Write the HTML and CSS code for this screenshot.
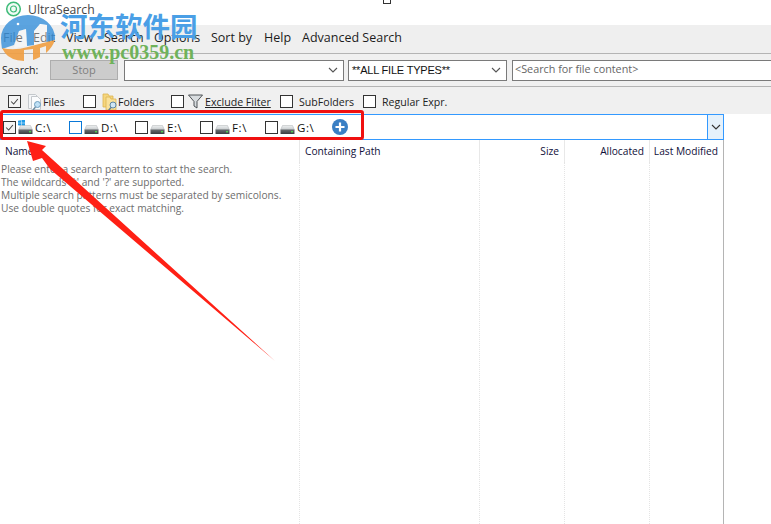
FILE: index.html
```html
<!DOCTYPE html>
<html lang="en">
<head>
<meta charset="utf-8">
<title>UltraSearch</title>
<link rel="stylesheet" href="styles.css">
</head>
<body>
<svg class="defs" width="0" height="0" aria-hidden="true">
  <defs>
    <linearGradient id="hddtop" x1="0" y1="0" x2="0" y2="1"><stop offset="0" stop-color="#eef0f1"/><stop offset="1" stop-color="#c4c8ca"/></linearGradient>
    <linearGradient id="hddbody" x1="0" y1="0" x2="0" y2="1"><stop offset="0" stop-color="#6b7073"/><stop offset="1" stop-color="#3a3e41"/></linearGradient>
  </defs>
  <symbol id="drive" viewBox="0 0 15 9">
    <path d="M2.500 .5h10l2 4.500H.5z" fill="url(#hddtop)" stroke="#aeb2b4" stroke-width=".5"/>
    <rect x=".5" y="4.500" width="14" height="4.500" rx=".6" fill="url(#hddbody)"/>
    <rect x="11" y="6" width="2" height="1.400" fill="#4fd04f"/>
  </symbol>
</svg>
<div class="app">
  <header class="titlebar">
    <div class="title-group">
      <svg class="app-icon" viewBox="0 0 18 18"><circle cx="8.500" cy="8" r="6.800" fill="#f0fbf5" stroke="#3dbb78" stroke-width="1.500"/><circle cx="8.500" cy="8" r="3" fill="none" stroke="#3dbb78" stroke-width="1.200"/></svg>
      <span class="app-name">UltraSearch</span>
    </div>
    <span class="title-mark"></span>
  </header>

  <nav class="menubar">
    <span class="menu m1">File</span>
    <span class="menu m2">Edit</span>
    <span class="menu m3">View</span>
    <span class="menu m4">Search</span>
    <span class="menu m5">Options</span>
    <span class="menu m6">Sort by</span>
    <span class="menu m7">Help</span>
    <span class="menu">Advanced Search</span>
  </nav>

  <section class="toolbar">
    <label class="search-label">Search:</label>
    <button class="stop">Stop</button>
    <div class="combo combo-pattern"><span class="combo-text"></span><svg class="chev" viewBox="0 0 10 6"><path d="M1 1l4 4 4-4" fill="none" stroke="#555" stroke-width="1.100"/></svg></div>
    <div class="combo combo-types"><span class="combo-text">**ALL FILE TYPES**</span><svg class="chev" viewBox="0 0 10 6"><path d="M1 1l4 4 4-4" fill="none" stroke="#555" stroke-width="1.100"/></svg></div>
    <div class="content-box">&lt;Search for file content&gt;</div>
  </section>

  <section class="options">
    <span class="opt opt-files"><i class="box on"><svg viewBox="0 0 13 13"><path d="M2.500 6.500l3 3 5-6" fill="none" stroke="#444" stroke-width="1.200"/></svg></i>
      <svg class="opt-icon" viewBox="0 0 16 18"><path d="M1.500 1.500h7l3 3v11h-10z" fill="#f4f6f8" stroke="#c4c8cc"/><path d="M4.500 3.500h6l3 3v10h-9z" fill="#fbfcfd" stroke="#c4c8cc"/><circle cx="10.500" cy="11.500" r="3" fill="#bfe0f5" stroke="#6d9dbd"/><path d="M8.500 14l-2.500 3" stroke="#6d8aa0" stroke-width="1.400"/></svg>
      Files</span>
    <span class="opt opt-folders"><i class="box"></i>
      <svg class="opt-icon" viewBox="0 0 16 18"><path d="M1 1h5l1 2h4v11H1z" fill="#f5d67e" stroke="#dcb450" stroke-width=".8"/><path d="M4 4h4l1 2h5v11H4z" fill="#f9e19a" stroke="#dcb450" stroke-width=".8"/><circle cx="11" cy="12" r="3" fill="#cfe6f5" stroke="#5d87a5"/><path d="M9 14.500l-2.500 3" stroke="#5d7d95" stroke-width="1.400"/></svg>
      Folders</span>
    <span class="opt opt-filter"><i class="box"></i>
      <svg class="opt-funnel" viewBox="0 0 15 15"><path d="M.5 1h14L9 7.500V14l-3-2V7.500z" fill="#d8dcdf" stroke="#3d4245" stroke-width=".9"/></svg>
      <u>Exclude Filter</u></span>
    <span class="opt opt-sub"><i class="box"></i><span class="opt-text">SubFolders</span></span>
    <span class="opt"><i class="box"></i><span class="opt-text">Regular Expr.</span></span>
  </section>

  <section class="drives">
    <div class="drive-list">
      <span class="drive d-c"><i class="box on"><svg viewBox="0 0 13 13"><path d="M2.500 6.500l3 3 5-6" fill="none" stroke="#444" stroke-width="1.200"/></svg></i>
        <span class="drive-icon"><svg class="win" viewBox="0 0 7 6"><path d="M0 .7l3-.5v2.500H0zM3.500.1L7 -.3v3H3.500zM0 3.200h3v2.500L0 5.300zM3.500 3.200H7v3l-3.500-.5z" fill="#1f9be8"/></svg><svg class="hdd"><use href="#drive"/></svg></span>
        <span class="drive-label">C:\</span></span>
      <span class="drive"><i class="box focus"></i><span class="drive-icon"><svg class="hdd"><use href="#drive"/></svg></span><span class="drive-label">D:\</span></span>
      <span class="drive d-e"><i class="box"></i><span class="drive-icon"><svg class="hdd"><use href="#drive"/></svg></span><span class="drive-label">E:\</span></span>
      <span class="drive d-e"><i class="box"></i><span class="drive-icon"><svg class="hdd"><use href="#drive"/></svg></span><span class="drive-label">F:\</span></span>
      <span class="drive d-g"><i class="box"></i><span class="drive-icon"><svg class="hdd"><use href="#drive"/></svg></span><span class="drive-label">G:\</span></span>
      <svg class="add" viewBox="0 0 16 16"><circle cx="8" cy="8" r="8" fill="#3a7fc4"/><path d="M8 3.500v9M3.500 8h9" stroke="#fff" stroke-width="2.200"/></svg>
    </div>
    <div class="drop"><svg class="chev" viewBox="0 0 10 6"><path d="M1 1l4 4 4-4" fill="none" stroke="#333" stroke-width="1.100"/></svg></div>
  </section>

  <section class="results">
    <div class="cols head">
      <div class="col">Name</div>
      <div class="col">Containing Path</div>
      <div class="col right">Size</div>
      <div class="col right">Allocated</div>
      <div class="col right last">Last Modified</div>
    </div>
    <div class="cols body">
      <div class="col msg">
        <p>Please enter a search pattern to start the search.</p>
        <p>The wildcards '*' and '?' are supported.</p>
        <p>Multiple search patterns must be separated by semicolons.</p>
        <p>Use double quotes for exact matching.</p>
      </div>
      <div class="col"></div>
      <div class="col"></div>
      <div class="col"></div>
      <div class="col last"></div>
    </div>
  </section>
</div>

<!-- overlays that sit on top of the screenshot -->
<div class="redbox"></div>
<svg class="arrow" viewBox="0 0 771 524"><path d="M27 141L46 146L42 150L275 361L50 169L42 158L33 161z" fill="#ff2015"/></svg>
<div class="watermark">
  <svg class="wm-logo" viewBox="0 0 56 46">
    <path d="M1 23A27 23 0 0 1 55 23L55 25L47 27V10L40 9L34 16V30L27 31L26 14L19 16L14 30L2 34Q1 28 1 23z" fill="#3f94da" fill-opacity=".85"/>
    <path d="M2 33Q14 36 28 32Q42 28 55 25Q52 33 46 38V31L40 33V42Q36 44 33 45V34L24 35V46Q10 45 5 38z" fill="#f0a044" fill-opacity=".92"/>
    <path d="M19 16L26 14L27 31L14 33zM34 16L40 9L47 10V27L34 30z" fill="#fff" fill-opacity=".4"/>
    <circle cx="18" cy="9" r="1.300" fill="#fff"/>
  </svg>
  <div class="wm-cn">河东软件园</div>
  <div class="wm-url">www.pc0359.cn</div>
</div>
</body>
</html>
```
FILE: styles.css
```css
* { box-sizing: border-box; }
html, body { margin: 0; padding: 0; }
body {
  width: 771px;
  height: 524px;
  overflow: hidden;
  background: #fff;
  font-family: "Open Sans", "Noto Sans", sans-serif;
  font-size: 11px;
  color: #222;
  position: relative;
}
.defs { position: absolute; }
.app { display: flex; flex-direction: column; height: 524px; }

.titlebar { height: 25px; display: flex; background: #fff; }
.title-group { width: 383px; display: flex; align-items: center; padding: 0 0 6px 5px; }
.app-icon { width: 18px; height: 18px; margin-top: 1px; }
.app-name { margin-left: 5px; font-size: 12.2px; color: #444; }
.title-mark { width: 8px; height: 4px; border: 1px solid #333; border-top: 0; }

.menubar {
  height: 29px;
  background: #efefef;
  border-bottom: 1px solid #b4b4b4;
  display: flex;
  align-items: center;
  padding: 0 0 4px 3px;
  font-size: 12.5px;
  color: #1c1c1c;
}
.menu { flex: none; }
.m1 { width: 30px; } .m2 { width: 33px; } .m3 { width: 38px; } .m4 { width: 50px; }
.m5 { width: 57px; } .m6 { width: 53px; } .m7 { width: 38px; }

.toolbar {
  height: 33px;
  background: #f0f0f0;
  border-bottom: 1px solid #b4b4b4;
  display: flex;
  align-items: center;
  padding: 0 0 0 2px;
  overflow: hidden;
}
.toolbar > * { flex: none; }
.search-label { width: 48px; font-size: 10.6px; }
.stop {
  width: 68px; height: 20px; padding: 0 0 2px;
  background: #ccc; border: 1px solid #adadad; color: #7f7f7f;
  font: 11px "Open Sans", sans-serif;
}
.combo, .content-box {
  height: 21px; background: #fff; border: 1px solid #7a7a7a;
  display: flex; align-items: center;
}
.combo { justify-content: space-between; padding: 0 5px 0 3px; }
.combo-pattern { width: 220px; margin-left: 6px; }
.combo-types { width: 159px; margin-left: 4px; }
.combo-text { font-family: "Liberation Sans", sans-serif; font-size: 11px; color: #111; letter-spacing: -.2px; }
.chev { width: 10px; height: 6px; }
.content-box {
  width: 270px; margin-left: 5px; padding: 0 0 3px 2px; color: #666; font-size: 10.8px;
}

.options {
  height: 27px; background: #f0f0f0; display: flex; align-items: center;
  padding: 2px 0 0 8px; font-size: 10.6px;
}
.opt { display: flex; align-items: center; flex: none; }
.opt-files { width: 75px; } .opt-folders { width: 88px; } .opt-filter { width: 109px; } .opt-sub { width: 83px; }
.opt-icon { width: 16px; height: 18px; margin-left: 6px; margin-right: 0; }
.opt-funnel { width: 15px; height: 15px; margin-left: 4px; margin-right: 2px; }
.opt-text { margin-left: 6px; }
.box { display: block; width: 13px; height: 13px; flex: none; border: 1px solid #333; background: #fff; }
.box svg { display: block; width: 11px; height: 11px; }
.box.on { background: #f4f4f4; }
.box.focus { border-color: #0a78d7; }

.drives {
  width: 724px; height: 26px; flex: none;
  border: 1px solid #3399ff; background: #fff;
  display: flex; justify-content: space-between;
}
.drive-list { display: flex; align-items: center; padding-left: 2px; }
.drive { display: flex; align-items: center; width: 66px; flex: none; }
.d-e, .d-g { width: 65px; }
.drive-icon { position: relative; display: block; width: 15px; height: 14px; margin-left: 2px; flex: none; }
.hdd { position: absolute; left: 0; bottom: 0; width: 15px; height: 9px; }
.win { position: absolute; left: 0; top: 0; width: 7px; height: 6px; }
.drive-label { margin-left: 2px; font-size: 11.5px; letter-spacing: .6px; color: #111; }
.add { width: 16px; height: 16px; margin-left: 2px; }
.drop { width: 16px; background: #e5f1fb; border-left: 1px solid #3399ff; display: flex; align-items: center; justify-content: center; }

.results { width: 724px; flex: 1; display: flex; flex-direction: column; border-right: 1px solid #b4b4b4; min-height: 0; }
.cols { display: grid; grid-template-columns: 300px 180px 85px 85px 1fr; }
.head { height: 22px; color: #10103a; font-size: 10.2px; }
.head .col { padding: 4px 0 0 5px; border-right: 1px solid #e8e8e8; white-space: nowrap; }
.head .right { text-align: right; padding-right: 5px; }
.head .last { border-right: 0; padding-left: 0; }
.body { flex: 1; }
.body .col { border-right: 1px dotted #e4e4e4; }
.body .last { border-right: 0; }
.msg { padding: 1px 0 0 1px; color: #6d6d6d; font-size: 10.2px; line-height: 13px; }
.msg p { margin: 0; }

/* overlays */
.redbox { position: absolute; left: 0; top: 110px; width: 364px; height: 30px; border: 3px solid #f01010; border-radius: 3px; }
.arrow { position: absolute; left: 0; top: 0; width: 771px; height: 524px; pointer-events: none; }
.watermark { position: absolute; left: 0; top: 0; width: 200px; height: 64px; }
.wm-logo { position: absolute; left: 0; top: 15px; width: 56px; height: 46px; }
.wm-cn {
  position: absolute; left: 60px; top: 7px;
  font: 700 27.500px "Noto Sans CJK SC", sans-serif; line-height: 36px; color: #4a9fe6; white-space: nowrap;
}
.wm-url {
  position: absolute; left: 62px; top: 42px;
  font: 700 20px "Liberation Serif", serif; line-height: 20px; color: #6fb25a; white-space: nowrap;
}
```
